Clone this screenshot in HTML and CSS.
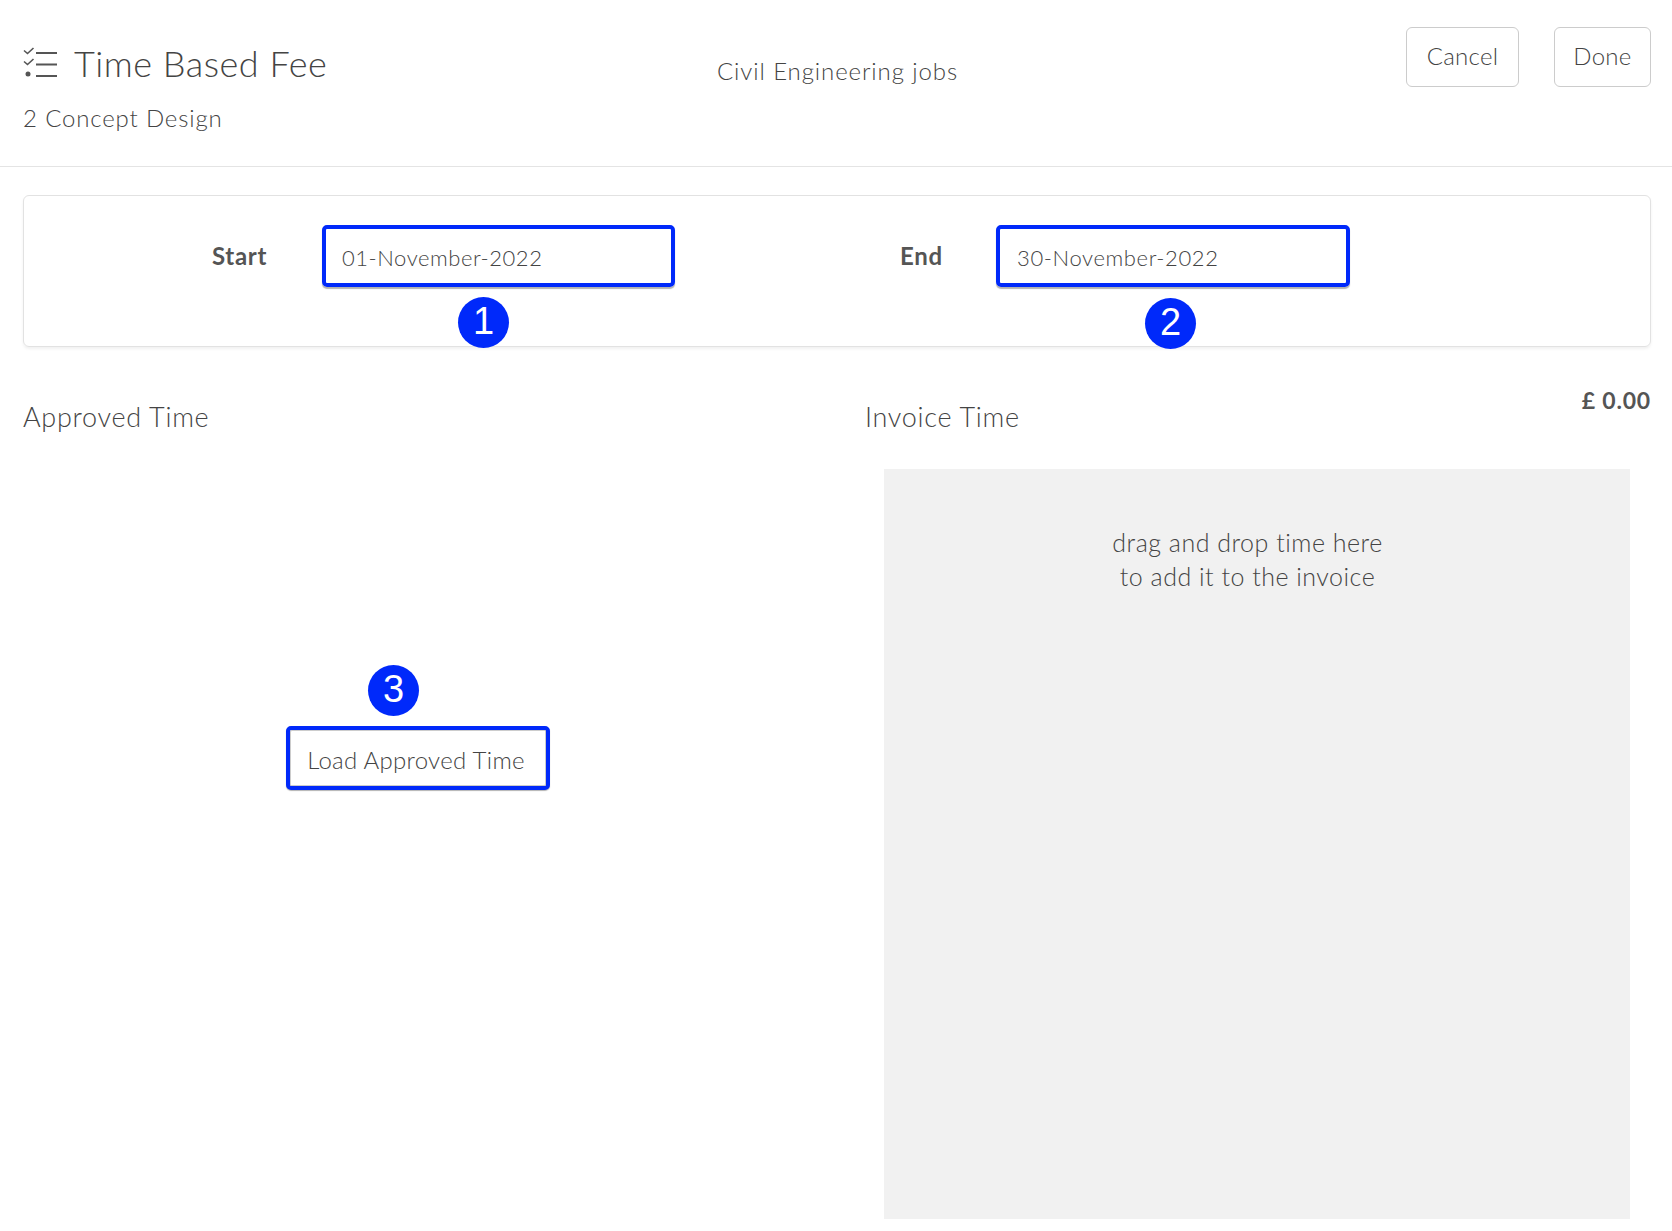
FILE: index.html
```html
<!DOCTYPE html>
<html lang="en">
<head>
    <meta charset="UTF-8">
    <title>Time Based Fee</title>
    <link rel="stylesheet" href="styles.css">
</head>
<body>

<div class="header">
    <div class="header-left">
        <div class="title-row">
            <svg class="title-icon" width="36" height="32" viewBox="0 0 36 32">
                <path d="M1 3.5l3.5 3L10.5 1M1 14.5l3.5 3 6-5.500" fill="none" stroke="#555" stroke-width="1.6"/>
                <circle cx="5" cy="27" r="2.500" fill="#555"/>
                <path d="M13 6h21M13 17.500h21M13 29h21" fill="none" stroke="#555" stroke-width="1.800"/>
            </svg>
            <h1 class="title">Time Based Fee</h1>
        </div>
        <div class="subtitle">2 Concept Design</div>
    </div>
    <div class="job-name">Civil Engineering jobs</div>
    <div class="header-buttons">
        <div class="button cancel">Cancel</div>
        <div class="button done">Done</div>
    </div>
</div>

<div class="dates">
    <div class="date-label start-label">Start</div>
    <div class="date-input">
        01-November-2022
        <span class="badge badge-date-1">1</span>
    </div>
    <div class="date-label end-label">End</div>
    <div class="date-input">
        30-November-2022
        <span class="badge badge-date-2">2</span>
    </div>
</div>

<div class="columns">
    <div class="approved">
        <div class="section-title">Approved Time</div>
        <div class="button load">
            Load Approved Time
            <span class="badge badge-load">3</span>
        </div>
    </div>
    <div class="invoice">
        <div class="invoice-head">
            <div class="section-title">Invoice Time</div>
            <div class="amount">£ 0.00</div>
        </div>
        <div class="dropzone">drag and drop time here<br>to add it to the invoice</div>
    </div>
</div>

</body>
</html>
```

FILE: styles.css
```css
* {
    box-sizing: border-box;
}
body {
    margin: 0;
    font-family: Lato, "Open Sans", sans-serif;
    color: #444;
    background-color: white;
}
.header {
    display: flex;
    height: 167px;
    padding: 27px 21px 0 23px;
    border-bottom: 1px solid #e4e4e4;
}
.header-left {
    width: 694px;
    padding-top: 16px;
}
.title-row {
    display: flex;
    align-items: center;
    height: 40px;
}
.title-icon {
    margin-right: 15px;
}
.title {
    margin: 0;
    font-size: 36px;
    font-weight: 300;
    letter-spacing: 0.5px;
}
.subtitle {
    margin-top: 20px;
    font-size: 24px;
    font-weight: 300;
    letter-spacing: 0.85px;
}
.job-name {
    padding-top: 29px;
    font-size: 24px;
    font-weight: 300;
    letter-spacing: 0.9px;
}
.header-buttons {
    display: flex;
    gap: 35px;
    margin-left: auto;
}
.button {
    display: flex;
    align-items: center;
    justify-content: center;
    border: 1px solid #ccc;
    border-radius: 6px;
    background-color: white;
    font-size: 24px;
    font-weight: 300;
    letter-spacing: 0.3px;
}
.cancel {
    width: 113px;
    height: 60px;
    padding-bottom: 4px;
}
.done {
    width: 97px;
    height: 60px;
    padding-bottom: 4px;
}
.dates {
    display: flex;
    align-items: flex-start;
    height: 152px;
    margin: 28px 21px 0 23px;
    padding: 29px 0 0 188px;
    border: 1px solid #e2e2e2;
    border-radius: 6px;
    box-shadow: 0 2px 3px rgba(0, 0, 0, 0.06);
}
.date-label {
    font-size: 24px;
    font-weight: 700;
    letter-spacing: 0.7px;
    color: #555;
    line-height: 61px;
}
.start-label {
    width: 110px;
}
.end-label {
    width: 96px;
    margin-left: 225px;
}
.date-input {
    position: relative;
    display: flex;
    align-items: center;
    width: 353px;
    height: 62px;
    padding: 2px 0 0 16px;
    border: 4px solid #0029fa;
    border-radius: 5px;
    font-size: 22px;
    font-weight: 300;
    letter-spacing: 0.55px;
    box-shadow: 0 2px 1px rgba(0, 0, 0, 0.3);
}
.end-label + .date-input {
    width: 354px;
    padding-left: 17px;
    letter-spacing: 0.62px;
}
.badge {
    position: absolute;
    width: 51px;
    height: 51px;
    border-radius: 50%;
    background-color: #0029fa;
    color: white;
    font-family: "Liberation Sans", Arial, sans-serif;
    font-size: 38px;
    font-weight: 400;
    letter-spacing: 0;
    line-height: 49px;
    text-align: center;
}
.badge-date-1 {
    top: 68px;
    left: 132px;
}
.badge-date-2 {
    top: 69px;
    left: 145px;
}
.badge-load {
    top: -65px;
    left: 78px;
}
.columns {
    display: flex;
    padding: 0 21px 0 23px;
}
.approved {
    width: 842px;
}
.section-title {
    font-size: 27px;
    font-weight: 300;
    letter-spacing: 0.72px;
}
.approved .section-title {
    padding-top: 53px;
}
.load {
    position: relative;
    width: 264px;
    height: 64px;
    margin: 293px 0 0 263px;
    padding: 3px 4px 0 0;
    border: 4px solid #0029fa;
    border-radius: 5px;
    box-shadow: inset -1px -1px 0 #ccc, inset 1px 1px 0 #ccc, 0 1px 1px rgba(0, 0, 0, 0.3);
}
.invoice {
    flex: 1;
}
.invoice-head {
    display: flex;
    justify-content: space-between;
    padding-top: 53px;
}
.amount {
    margin-top: -14px;
    font-size: 23px;
    font-weight: 700;
    letter-spacing: 0.8px;
    color: #555;
}
.dropzone {
    width: 746px;
    height: 750px;
    margin: 36px 0 0 19px;
    padding: 56px 19px 0 0;
    background-color: #f1f1f1;
    font-size: 25px;
    font-weight: 300;
    letter-spacing: 0.5px;
    line-height: 34px;
    text-align: center;
}
```
